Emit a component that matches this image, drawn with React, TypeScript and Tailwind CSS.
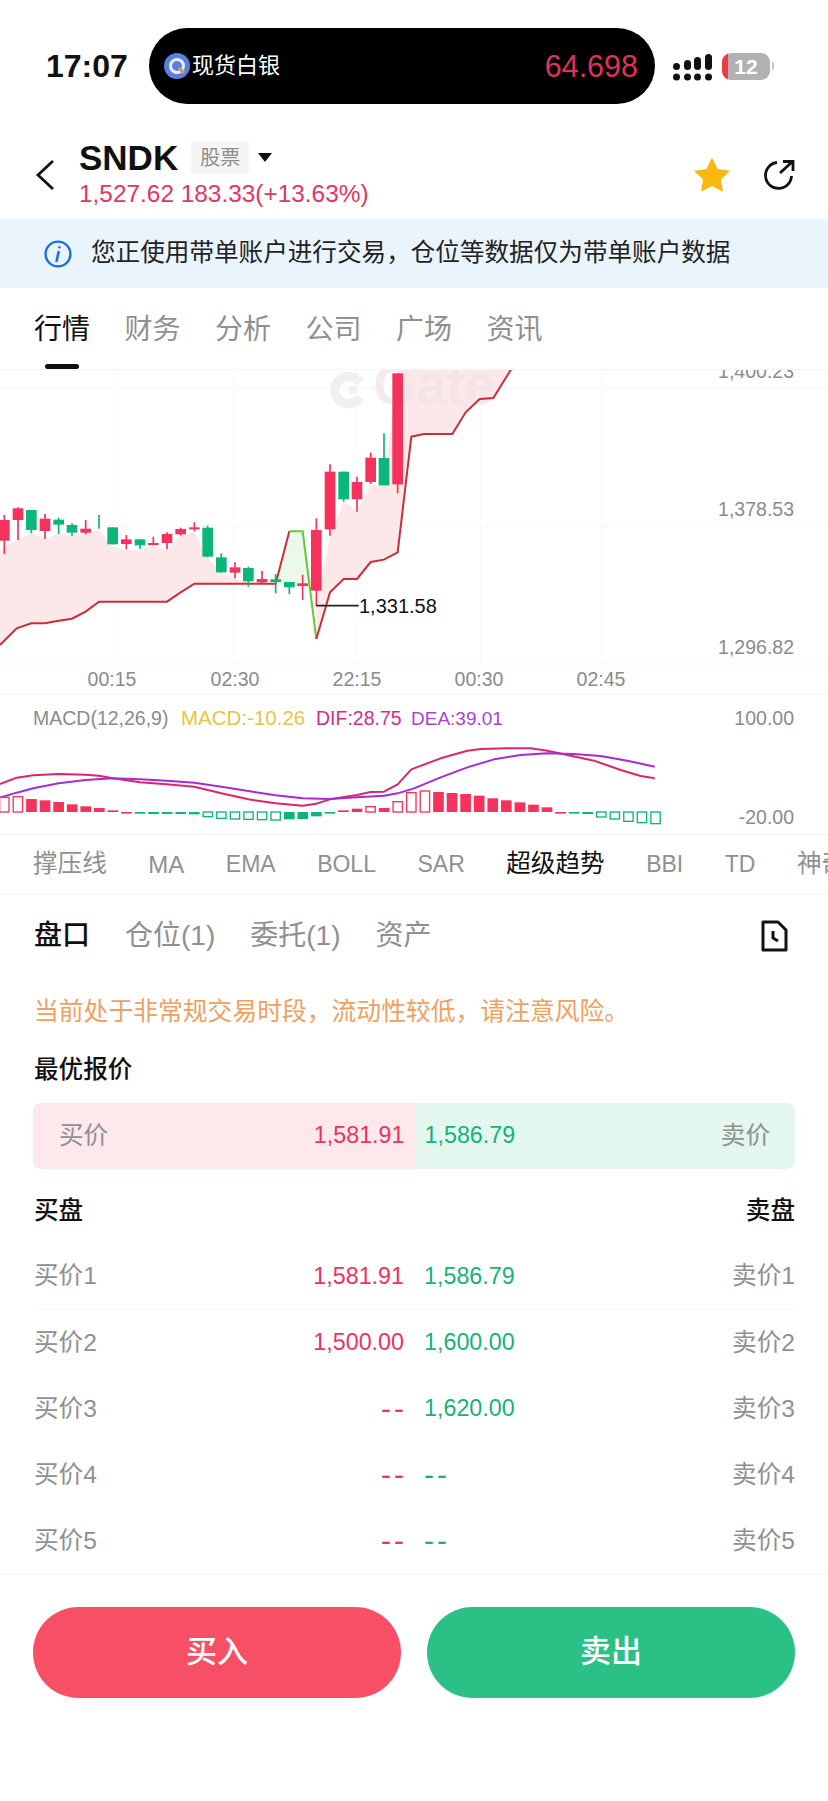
/**
 * SNDK 行情详情页
 */

import React from 'react';

const FONT = "font-['Liberation_Sans','Noto_Sans_CJK_SC',sans-serif]";

// 坐标都是 3 倍图上的值，svg 用 viewBox 缩回去
// [x, 涨跌, 上影, 下影, 实体上, 实体下]
type Candle = [number, 'r' | 'g', number, number, number, number];

const CANDLES: Candle[] = [
  [13, 'r', 435, 552, 450, 512],
  [54, 'r', 412, 510, 415, 450],
  [94, 'g', 420, 490, 420, 480],
  [135, 'r', 432, 507, 446, 483],
  [176, 'g', 443, 492, 449, 464],
  [216, 'g', 460, 497, 465, 488],
  [257, 'r', 450, 493, 476, 488],
  [297, 'g', 435, 476, 435, 435],
  [338, 'g', 472, 523, 472, 523],
  [379, 'r', 495, 538, 508, 522],
  [420, 'g', 508, 537, 508, 526],
  [460, 'r', 500, 526, 519, 525],
  [501, 'r', 487, 538, 492, 519],
  [542, 'r', 473, 497, 477, 493],
  [583, 'r', 457, 484, 472, 478],
  [623, 'g', 467, 562, 473, 560],
  [664, 'g', 550, 608, 562, 607],
  [705, 'r', 577, 625, 592, 608],
  [745, 'g', 590, 650, 594, 634],
  [786, 'r', 603, 640, 627, 637],
  [827, 'g', 612, 670, 628, 636],
  [868, 'g', 636, 672, 636, 652],
  [908, 'r', 614, 690, 640, 648],
  [949, 'r', 445, 708, 480, 662],
  [990, 'r', 283, 497, 305, 478],
  [1031, 'g', 305, 395, 305, 388],
  [1071, 'r', 320, 425, 336, 388],
  [1112, 'r', 248, 342, 263, 336],
  [1152, 'g', 190, 346, 264, 346],
  [1193, 'r', 10, 370, 10, 343],
];

const TREND_A = '0,825 50,775 94,760 135,760 176,752 216,746 257,725 297,695 501,695 542,667 583,641 827,641 868,484';
const TREND_G = '868,484 908,484 949,807';
const TREND_B =
  '949,807 990,667 1031,627 1071,627 1112,576 1152,569 1193,547 1234,200 1272,192 1357,192 1397,127 1439,87 1480,84 1527,8 1545,-20';

const FILL_A =
  '0,545 13,530 54,510 94,490 135,505 176,492 216,495 257,490 297,480 338,530 379,540 420,540 460,528 501,540 542,497 583,485 623,562 664,610 705,625 745,640 786,640 827,641 583,641 542,667 501,695 297,695 257,725 216,746 176,752 135,760 94,760 50,775 0,825';
const FILL_G = '827,641 868,484 908,484 935,660 908,650 868,650';
const FILL_B =
  '949,700 990,500 1031,395 1071,425 1112,345 1152,345 1193,0 1545,0 1527,8 1480,84 1439,87 1397,127 1357,192 1272,192 1234,200 1193,547 1152,569 1112,576 1071,627 1031,627 990,667 949,807';

const GRID_X = [342, 704, 1072, 1442, 1804];
const GRID_Y = [55, 467, 882];

const DIF =
  '0,282 50,263 100,256 176,252 257,254 297,257 338,265 420,277 500,283 583,290 664,310 745,328 827,340 908,347 949,341 990,328 1071,315 1112,306 1152,305 1193,283 1234,238 1242,235 1322,205 1402,182 1442,177 1522,175 1592,175 1642,182 1702,195 1782,212 1862,240 1922,258 1964,265';
const DEA =
  '0,323 50,308 100,295 176,280 257,270 338,265 420,268 500,272 583,278 664,290 745,303 827,316 908,325 990,327 1071,322 1152,317 1193,310 1242,295 1322,262 1402,232 1482,208 1562,195 1642,190 1722,192 1802,198 1882,212 1964,230';

// [顶端/底端, 涨跌, 是否空心]，零轴在 366
const BARS: [number, 'r' | 'g', boolean][] = [
  [322, 'r', true], [320, 'r', true], [327, 'r', false], [331, 'r', false], [336, 'r', false],
  [343, 'r', false], [349, 'r', false], [354, 'r', false], [361, 'r', false], [371, 'r', false],
  [370, 'g', false], [372, 'g', false], [372, 'g', false], [372, 'g', false], [373, 'g', false],
  [380, 'g', true], [385, 'g', true], [387, 'g', true], [388, 'g', true], [389, 'g', true],
  [390, 'g', true], [388, 'g', false], [387, 'g', false], [379, 'g', false], [371, 'g', false],
  [361, 'r', false], [356, 'r', false], [350, 'r', true], [354, 'r', false], [335, 'r', true],
  [308, 'r', true], [303, 'r', true], [306, 'r', false], [309, 'r', false], [312, 'r', false],
  [317, 'r', false], [325, 'r', false], [331, 'r', false], [337, 'r', false], [344, 'r', false],
  [352, 'r', false], [369, 'r', false], [370, 'g', false], [372, 'g', false], [381, 'g', true],
  [387, 'g', true], [394, 'g', true], [398, 'g', true], [401, 'g', true],
];

const RED = '#f5325c';
const GREEN = '#0bb67a';

const NAV_TABS = ['行情', '财务', '分析', '公司', '广场', '资讯'];
const INDICATORS = ['撑压线', 'MA', 'EMA', 'BOLL', 'SAR', '超级趋势', 'BBI', 'TD', '神奇九转'];
const CJK_INDICATORS = ['撑压线', '超级趋势', '神奇九转'];
const SUB_TABS = ['盘口', '仓位(1)', '委托(1)', '资产'];
const BOOK = [
  ['1', '1,581.91', '1,586.79'],
  ['2', '1,500.00', '1,600.00'],
  ['3', '--', '1,620.00'],
  ['4', '--', '--'],
  ['5', '--', '--'],
];

const StatusBar = () => (
  <div className="h-[120px] pt-[28px] flex items-start">
    <div className="w-[149px] h-[76px] pl-[46px] flex items-center text-[32px] leading-none font-semibold text-[#111]">17:07</div>
    <div className="w-[506px] h-[76px] rounded-full bg-black flex items-center pl-[15px] pr-[17px]">
      <svg width="26" height="26" viewBox="0 0 26 26" className="shrink-0">
        <circle cx="13" cy="13" r="13" fill="#5b7fe0" />
        <circle cx="13" cy="13" r="6.5" fill="none" stroke="#e8eefc" strokeWidth="3" />
        <path d="M15 15l5 5" stroke="#c9a35a" strokeWidth="3.5" />
      </svg>
      <span className="ml-[2px] text-[22px] leading-none text-white">现货白银</span>
      <span className="ml-auto text-[30.5px] leading-none text-[#e0315a]">64.698</span>
    </div>
    <div className="h-[76px] flex items-center ml-[18px]">
      <svg width="42" height="30" viewBox="0 0 42 30" className="shrink-0 mt-[6px]">
        <g fill="#111">
          <rect x="0" y="9" width="7" height="7" rx="3.5" />
          <rect x="11" y="6" width="7" height="10" rx="3.5" />
          <rect x="21" y="3" width="7" height="13" rx="3.5" />
          <rect x="32" y="0" width="7" height="16" rx="3.5" />
          <circle cx="3.5" cy="23" r="3.5" />
          <circle cx="14.5" cy="23" r="3.5" />
          <circle cx="24.5" cy="23" r="3.5" />
          <circle cx="35.5" cy="23" r="3.5" />
        </g>
      </svg>
      <div className="ml-[7px] relative w-[48px] h-[27px] rounded-[9px] bg-[#b2b2b2] overflow-hidden flex items-center justify-center">
        <div className="absolute left-0 top-0 bottom-0 w-[6px] bg-[#ee3b47]" />
        <span className="text-[21px] leading-none font-bold text-white">12</span>
      </div>
      <div className="ml-[2px] w-[2px] h-[8px] rounded-r bg-[#c4c4c4]" />
    </div>
  </div>
);

const Header = () => (
  <div className="h-[99px] flex items-start">
    <svg width="20" height="32" viewBox="0 0 20 32" className="ml-[35px] mt-[39px] shrink-0">
      <path d="M18 2L3 16l15 14" fill="none" stroke="#111" strokeWidth="2.8" />
    </svg>
    <div className="ml-[24px] flex flex-col">
      <div className="h-[54px] pt-[21px] flex items-center">
        <span className="text-[35px] leading-none font-bold text-[#111]">SNDK</span>
        <span className="ml-[13px] w-[58px] h-[33px] rounded-[4px] bg-[#f5f5f5] flex items-center justify-center text-[20px] leading-none text-[#8e8e8e]">
          股票
        </span>
        <div className="ml-[9px] w-0 h-0 border-l-[7px] border-r-[7px] border-t-[9px] border-l-transparent border-r-transparent border-t-[#111]" />
      </div>
      <span className="mt-[6px] text-[24.4px] leading-[28px] text-[#e8345e] whitespace-nowrap">1,527.62 183.33(+13.63%)</span>
    </div>
    <svg width="36" height="34" viewBox="0 0 24 23" className="ml-auto mt-[38px] shrink-0">
      <path
        d="M12 .8l3.4 7.1 7.8 1-5.7 5.4 1.4 7.7L12 18.3l-6.9 3.7 1.4-7.7L.8 8.9l7.8-1z"
        fill="#fbb80e"
        stroke="#fbb80e"
        strokeLinejoin="round"
      />
    </svg>
    <svg width="34" height="32" viewBox="0 0 34 32" className="ml-[32px] mr-[32px] mt-[39px] shrink-0">
      <path d="M15 3.5A13 13 0 1 0 29.5 17" fill="none" stroke="#111" strokeWidth="2.8" />
      <path d="M18 14L30 3M21 2.5h10V12" fill="none" stroke="#111" strokeWidth="2.8" />
    </svg>
  </div>
);

const Banner = () => (
  <div className="h-[69px] bg-[#eaf4fc] flex items-center pl-[44px]">
    <svg width="28" height="28" viewBox="0 0 28 28" className="shrink-0">
      <circle cx="14" cy="14" r="12.4" fill="none" stroke="#1a6fe0" strokeWidth="2.4" />
      <path d="M15.4 7.2v.1M14.6 12l-2 9" fill="none" stroke="#1a6fe0" strokeWidth="2.6" strokeLinecap="round" />
    </svg>
    <span className="ml-[19px] text-[24.6px] leading-none text-[#222] whitespace-nowrap">
      您正使用带单账户进行交易，仓位等数据仅为带单账户数据
    </span>
  </div>
);

const NavTabs = () => (
  <div className="relative h-[82px] pl-[34px] flex items-start gap-[34.5px] pt-[24px] border-b border-[#f3f3f3]">
    {NAV_TABS.map((tab, idx) => (
      <span key={tab} className={`text-[28px] leading-[36px] ${idx === 0 ? 'text-[#111]' : 'text-[#8f9091]'}`}>
        {tab}
      </span>
    ))}
    <div className="absolute left-[45px] bottom-0 w-[34px] h-[5px] rounded-full bg-[#111]" />
  </div>
);

const KlineChart = () => (
  <div className="relative h-[325px] overflow-hidden border-b border-[#f2f2f2]">
    <svg width="828" height="325" viewBox="0 0 2484 975" className="absolute left-0 top-0">
      {GRID_X.map(x => (
        <line key={x} x1={x} x2={x} y1={0} y2={882} stroke="#f5f5f5" strokeWidth="2.5" />
      ))}
      {GRID_Y.map(y => (
        <line key={y} x1={0} x2={2484} y1={y} y2={y} stroke="#f3f3f3" strokeWidth="2.5" />
      ))}
      <polygon points={FILL_A} fill="#fce8e8" />
      <polygon points={FILL_G} fill="#ebf8ec" />
      <polygon points={FILL_B} fill="#fce8e8" />
      {/* 水印 */}
      <g>
        <path d="M1080 38A41 41 0 1 0 1080 82" fill="none" stroke="#f0f0f0" strokeWidth="28" />
        <rect x="1046" y="48" width="24" height="24" fill="#f0f0f0" />
        <text x="1120" y="102" fontSize="165" fontWeight="700" fontFamily="Liberation Sans" fill="#f0e4e4" fillOpacity="0.7">
          Gate
        </text>
      </g>
      <polyline points={TREND_A} fill="none" stroke="#c92f36" strokeWidth="6" />
      <polyline points={TREND_G} fill="none" stroke="#68c934" strokeWidth="6" />
      <polyline points={TREND_B} fill="none" stroke="#c92f36" strokeWidth="6" />
      {CANDLES.map(([x, dir, hi, lo, top, bottom]) => {
        const color = dir === 'r' ? RED : GREEN;
        return (
          <g key={x}>
            <line x1={x} x2={x} y1={hi} y2={lo} stroke={color} strokeWidth="5" />
            {bottom > top && <rect x={x - 16} y={top} width="32" height={Math.max(bottom - top, 5)} fill={color} />}
          </g>
        );
      })}
      <line x1="949" x2="1076" y1="707" y2="707" stroke="#222" strokeWidth="5" />
    </svg>
    <span className="absolute left-[359px] top-[236px] -translate-y-1/2 text-[20px] leading-none text-[#111]">1,331.58</span>
    <span className="absolute right-[34px] top-[2px] -translate-y-1/2 text-[19.5px] leading-none text-[#8b8b8b]">1,400.23</span>
    <span className="absolute right-[34px] top-[140px] -translate-y-1/2 text-[19.5px] leading-none text-[#8b8b8b]">1,378.53</span>
    <span className="absolute right-[34px] top-[278px] -translate-y-1/2 text-[19.5px] leading-none text-[#8b8b8b]">1,296.82</span>
    <span className="absolute left-[112px] top-[310px] -translate-x-1/2 -translate-y-1/2 text-[19.5px] leading-none text-[#8b8b8b]">00:15</span>
    <span className="absolute left-[235px] top-[310px] -translate-x-1/2 -translate-y-1/2 text-[19.5px] leading-none text-[#8b8b8b]">02:30</span>
    <span className="absolute left-[357px] top-[310px] -translate-x-1/2 -translate-y-1/2 text-[19.5px] leading-none text-[#8b8b8b]">22:15</span>
    <span className="absolute left-[479px] top-[310px] -translate-x-1/2 -translate-y-1/2 text-[19.5px] leading-none text-[#8b8b8b]">00:30</span>
    <span className="absolute left-[601px] top-[310px] -translate-x-1/2 -translate-y-1/2 text-[19.5px] leading-none text-[#8b8b8b]">02:45</span>
  </div>
);

const MacdChart = () => (
  <div className="relative h-[140px] border-b border-[#f2f2f2]">
    <div className="h-[46px] pl-[33px] pr-[34px] flex items-baseline text-[19.5px] leading-[46px] whitespace-nowrap">
      <span className="w-[148px] text-[#8b8b8b]">MACD(12,26,9)</span>
      <span className="w-[135px] text-[20.5px] text-[#e8c440]">MACD:-10.26</span>
      <span className="w-[95px] text-[#d0307f]">DIF:28.75</span>
      <span className="text-[19px] text-[#ab3fd6]">DEA:39.01</span>
      <span className="ml-auto text-[#8b8b8b]">100.00</span>
    </div>
    <svg width="828" height="94" viewBox="0 153 2484 282" className="block">
      <polyline points={DIF} fill="none" stroke="#e0246a" strokeWidth="6" strokeLinejoin="round" />
      <polyline points={DEA} fill="none" stroke="#a52cd4" strokeWidth="6" strokeLinejoin="round" />
      {BARS.map(([end, dir, hollow], idx) => {
        const color = dir === 'r' ? RED : GREEN;
        const x = 13 + 40.7 * idx - 16;
        const top = Math.min(end, 366);
        const h = Math.max(Math.abs(end - 366), 5);
        return hollow ? (
          <rect key={idx} x={x + 2} y={top} width="28" height={h} fill="#fff" stroke={color} strokeWidth="4" />
        ) : (
          <rect key={idx} x={x} y={top} width="32" height={h} fill={color} />
        );
      })}
    </svg>
    <span className="absolute right-[34px] top-[123px] -translate-y-1/2 text-[19.5px] leading-none text-[#8b8b8b]">-20.00</span>
  </div>
);

const IndicatorTabs = () => (
  <div className="h-[60px] pl-[33px] flex items-center gap-[41.5px] overflow-hidden whitespace-nowrap border-b border-[#f3f3f3]">
    {INDICATORS.map(name => (
      <span
        key={name}
        className={`shrink-0 leading-none ${CJK_INDICATORS.includes(name) ? 'text-[24.6px]' : name === 'MA' ? 'text-[24px]' : 'text-[23px]'} ${
          name === '超级趋势' ? 'text-[#111]' : 'text-[#8f9091]'
        }`}
      >
        {name}
      </span>
    ))}
  </div>
);

const SubTabs = () => (
  <div className="h-[82px] pl-[34px] pr-[40px] flex items-center gap-[35px]">
    {SUB_TABS.map((tab, idx) => (
      <span key={tab} className={`text-[28px] leading-none ${idx === 0 ? 'font-medium text-[#111]' : 'text-[#8f9091]'}`}>
        {tab}
      </span>
    ))}
    <svg width="27" height="32" viewBox="0 0 27 32" className="ml-auto shrink-0">
      <path d="M2 2h15l8 8v20H2z" fill="none" stroke="#111" strokeWidth="3" strokeLinejoin="round" />
      <path d="M12 11v7l5 3" fill="none" stroke="#111" strokeWidth="3" />
    </svg>
  </div>
);

const BestQuote = () => (
  <div className="mx-[33px] h-[66px] rounded-[8px] overflow-hidden flex text-[23.3px] leading-none">
    <div className="flex-1 bg-[#fde8ec] flex items-center justify-between pl-[26px] pr-[10px]">
      <span className="text-[24.6px] text-[#8f9091]">买价</span>
      <span className="text-[#e8345e]">1,581.91</span>
    </div>
    <div className="flex-1 bg-[#e3f7ef] flex items-center justify-between pl-[10px] pr-[25px]">
      <span className="text-[#14b27c]">1,586.79</span>
      <span className="text-[24.6px] text-[#8f9091]">卖价</span>
    </div>
  </div>
);

const OrderBook = () => (
  <div className="px-[33px]">
    <div className="h-[40px] mt-[22px] pl-[1px] flex items-center justify-between text-[24.6px] leading-none font-medium text-[#111]">
      <span>买盘</span>
      <span>卖盘</span>
    </div>
    <div className="mt-[13px]">
      {BOOK.map(([level, bid, ask], idx) => (
        <div key={level} className={`h-[66px] flex gap-[20px] text-[23.3px] leading-none ${idx === 0 ? 'border-b border-[#f5f5f5]' : ''}`}>
          <div className="flex-1 flex items-center justify-between">
            <span className="pl-[1px] text-[24.6px] text-[#8f9091]">买价{level}</span>
            <span className={`text-[#e8345e] ${bid === '--' ? 'text-[30px] tracking-[3px] mr-[-3px]' : ''}`}>{bid}</span>
          </div>
          <div className="flex-1 flex items-center justify-between">
            <span className={`text-[#14b27c] ${ask === '--' ? 'text-[30px] tracking-[3px]' : ''}`}>{ask}</span>
            <span className="text-[24.6px] text-[#8f9091]">卖价{level}</span>
          </div>
        </div>
      ))}
    </div>
  </div>
);

const App: React.FC = () => {
  return (
    <div className={`w-[828px] h-[1801px] bg-white overflow-hidden ${FONT}`}>
      <StatusBar />
      <Header />
      <Banner />
      <NavTabs />
      <KlineChart />
      <MacdChart />
      <IndicatorTabs />
      <SubTabs />
      <div className="h-[36px] mt-[17px] pl-[34px] flex items-center text-[24.8px] leading-none text-[#f0a060]">
        当前处于非常规交易时段，流动性较低，请注意风险。
      </div>
      <div className="h-[34px] mt-[23px] pl-[34px] flex items-center text-[24.6px] leading-none font-medium text-[#111]">最优报价</div>
      <div className="mt-[16px]">
        <BestQuote />
      </div>
      <OrderBook />
      <div className="border-t border-[#f3f3f3] px-[33px] pt-[32px] flex gap-[26px]">
        <button className="flex-1 h-[91px] rounded-full bg-[#f74f66] text-[31px] font-medium text-white">买入</button>
        <button className="flex-1 h-[91px] rounded-full bg-[#2bc186] text-[31px] font-medium text-white">卖出</button>
      </div>
    </div>
  );
};

export default App;
